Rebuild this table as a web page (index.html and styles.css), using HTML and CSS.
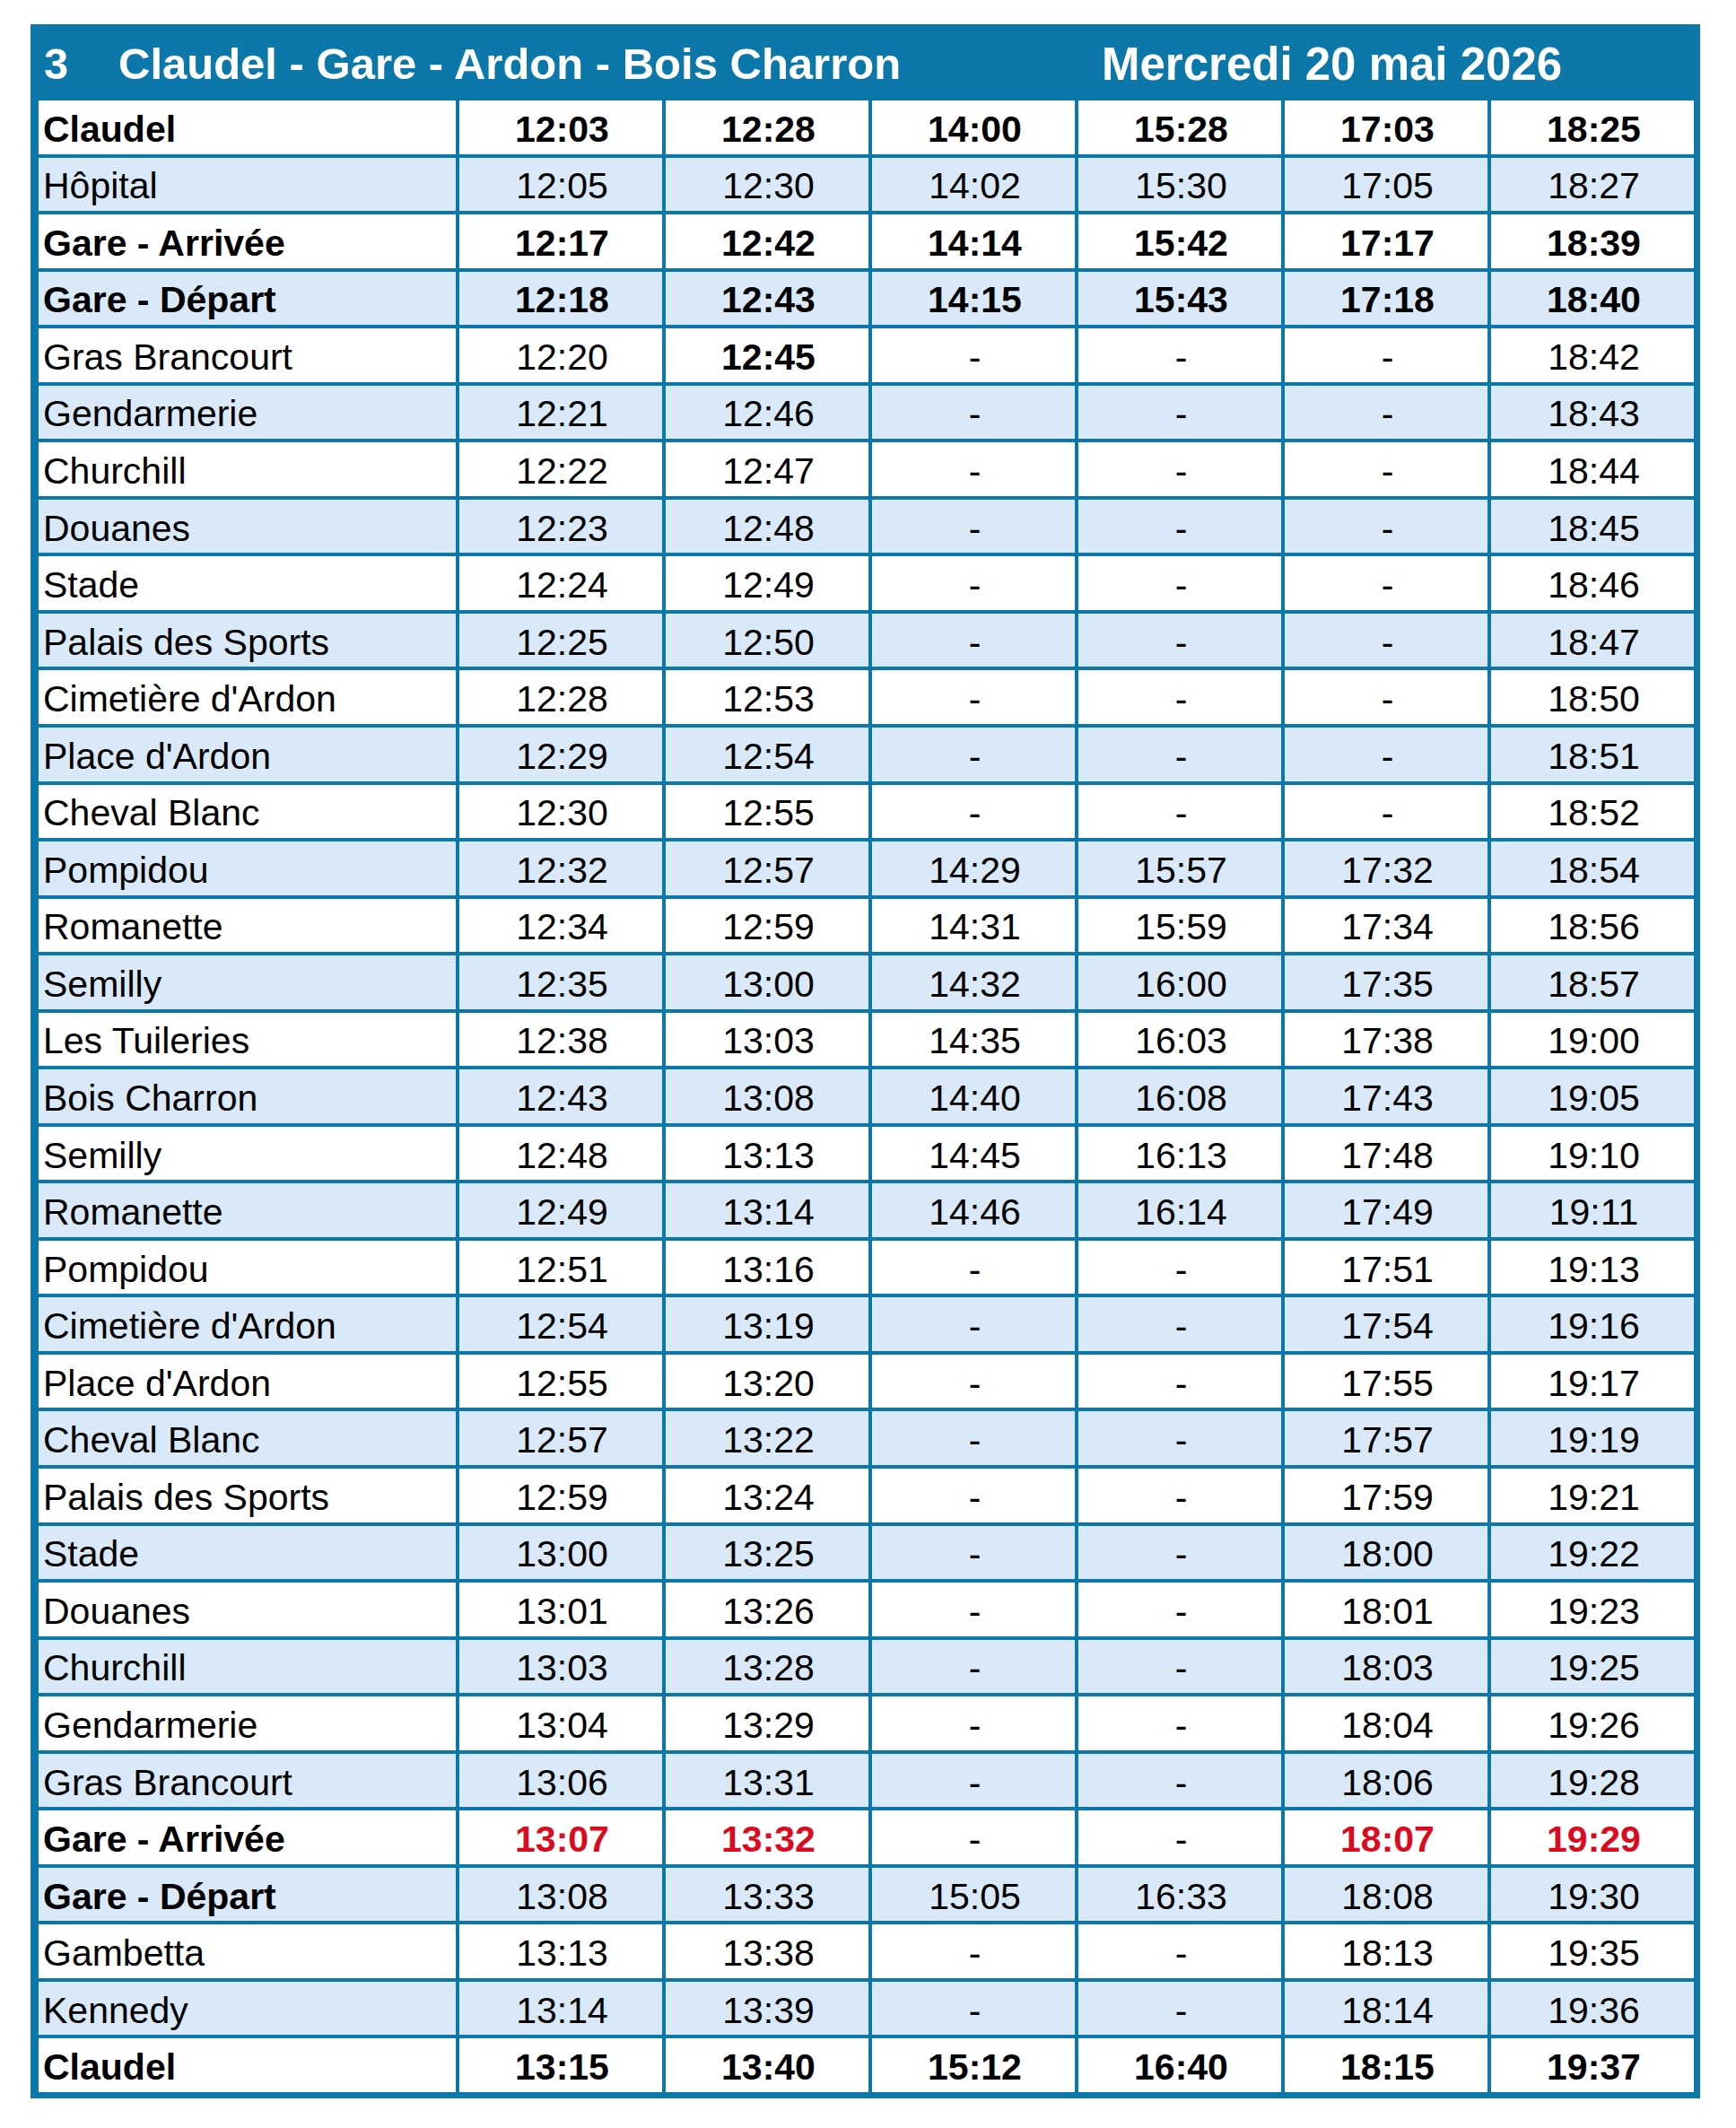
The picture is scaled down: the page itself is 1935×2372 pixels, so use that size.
FILE: index.html
```html
<!DOCTYPE html>
<html lang="fr">
<head>
<meta charset="utf-8">
<title>Ligne 3 - Mercredi 20 mai 2026</title>
<link rel="stylesheet" href="styles.css">
</head>
<body>
<div class="sheet">
  <div class="title-bar">
    <span class="line-no">3</span>
    <span class="route">Claudel - Gare - Ardon - Bois Charron</span>
    <span class="date">Mercredi 20 mai 2026</span>
  </div>
  <div class="board">
    <div class="row strong"><div class="stop">Claudel</div><div class="t">12:03</div><div class="t">12:28</div><div class="t">14:00</div><div class="t">15:28</div><div class="t">17:03</div><div class="t">18:25</div></div>
    <div class="row alt"><div class="stop">Hôpital</div><div class="t">12:05</div><div class="t">12:30</div><div class="t">14:02</div><div class="t">15:30</div><div class="t">17:05</div><div class="t">18:27</div></div>
    <div class="row strong"><div class="stop">Gare - Arrivée</div><div class="t">12:17</div><div class="t">12:42</div><div class="t">14:14</div><div class="t">15:42</div><div class="t">17:17</div><div class="t">18:39</div></div>
    <div class="row alt strong"><div class="stop">Gare - Départ</div><div class="t">12:18</div><div class="t">12:43</div><div class="t">14:15</div><div class="t">15:43</div><div class="t">17:18</div><div class="t">18:40</div></div>
    <div class="row"><div class="stop">Gras Brancourt</div><div class="t">12:20</div><div class="t b">12:45</div><div class="t">-</div><div class="t">-</div><div class="t">-</div><div class="t">18:42</div></div>
    <div class="row alt"><div class="stop">Gendarmerie</div><div class="t">12:21</div><div class="t">12:46</div><div class="t">-</div><div class="t">-</div><div class="t">-</div><div class="t">18:43</div></div>
    <div class="row"><div class="stop">Churchill</div><div class="t">12:22</div><div class="t">12:47</div><div class="t">-</div><div class="t">-</div><div class="t">-</div><div class="t">18:44</div></div>
    <div class="row alt"><div class="stop">Douanes</div><div class="t">12:23</div><div class="t">12:48</div><div class="t">-</div><div class="t">-</div><div class="t">-</div><div class="t">18:45</div></div>
    <div class="row"><div class="stop">Stade</div><div class="t">12:24</div><div class="t">12:49</div><div class="t">-</div><div class="t">-</div><div class="t">-</div><div class="t">18:46</div></div>
    <div class="row alt"><div class="stop">Palais des Sports</div><div class="t">12:25</div><div class="t">12:50</div><div class="t">-</div><div class="t">-</div><div class="t">-</div><div class="t">18:47</div></div>
    <div class="row"><div class="stop">Cimetière d'Ardon</div><div class="t">12:28</div><div class="t">12:53</div><div class="t">-</div><div class="t">-</div><div class="t">-</div><div class="t">18:50</div></div>
    <div class="row alt"><div class="stop">Place d'Ardon</div><div class="t">12:29</div><div class="t">12:54</div><div class="t">-</div><div class="t">-</div><div class="t">-</div><div class="t">18:51</div></div>
    <div class="row"><div class="stop">Cheval Blanc</div><div class="t">12:30</div><div class="t">12:55</div><div class="t">-</div><div class="t">-</div><div class="t">-</div><div class="t">18:52</div></div>
    <div class="row alt"><div class="stop">Pompidou</div><div class="t">12:32</div><div class="t">12:57</div><div class="t">14:29</div><div class="t">15:57</div><div class="t">17:32</div><div class="t">18:54</div></div>
    <div class="row"><div class="stop">Romanette</div><div class="t">12:34</div><div class="t">12:59</div><div class="t">14:31</div><div class="t">15:59</div><div class="t">17:34</div><div class="t">18:56</div></div>
    <div class="row alt"><div class="stop">Semilly</div><div class="t">12:35</div><div class="t">13:00</div><div class="t">14:32</div><div class="t">16:00</div><div class="t">17:35</div><div class="t">18:57</div></div>
    <div class="row"><div class="stop">Les Tuileries</div><div class="t">12:38</div><div class="t">13:03</div><div class="t">14:35</div><div class="t">16:03</div><div class="t">17:38</div><div class="t">19:00</div></div>
    <div class="row alt"><div class="stop">Bois Charron</div><div class="t">12:43</div><div class="t">13:08</div><div class="t">14:40</div><div class="t">16:08</div><div class="t">17:43</div><div class="t">19:05</div></div>
    <div class="row"><div class="stop">Semilly</div><div class="t">12:48</div><div class="t">13:13</div><div class="t">14:45</div><div class="t">16:13</div><div class="t">17:48</div><div class="t">19:10</div></div>
    <div class="row alt"><div class="stop">Romanette</div><div class="t">12:49</div><div class="t">13:14</div><div class="t">14:46</div><div class="t">16:14</div><div class="t">17:49</div><div class="t">19:11</div></div>
    <div class="row"><div class="stop">Pompidou</div><div class="t">12:51</div><div class="t">13:16</div><div class="t">-</div><div class="t">-</div><div class="t">17:51</div><div class="t">19:13</div></div>
    <div class="row alt"><div class="stop">Cimetière d'Ardon</div><div class="t">12:54</div><div class="t">13:19</div><div class="t">-</div><div class="t">-</div><div class="t">17:54</div><div class="t">19:16</div></div>
    <div class="row"><div class="stop">Place d'Ardon</div><div class="t">12:55</div><div class="t">13:20</div><div class="t">-</div><div class="t">-</div><div class="t">17:55</div><div class="t">19:17</div></div>
    <div class="row alt"><div class="stop">Cheval Blanc</div><div class="t">12:57</div><div class="t">13:22</div><div class="t">-</div><div class="t">-</div><div class="t">17:57</div><div class="t">19:19</div></div>
    <div class="row"><div class="stop">Palais des Sports</div><div class="t">12:59</div><div class="t">13:24</div><div class="t">-</div><div class="t">-</div><div class="t">17:59</div><div class="t">19:21</div></div>
    <div class="row alt"><div class="stop">Stade</div><div class="t">13:00</div><div class="t">13:25</div><div class="t">-</div><div class="t">-</div><div class="t">18:00</div><div class="t">19:22</div></div>
    <div class="row"><div class="stop">Douanes</div><div class="t">13:01</div><div class="t">13:26</div><div class="t">-</div><div class="t">-</div><div class="t">18:01</div><div class="t">19:23</div></div>
    <div class="row alt"><div class="stop">Churchill</div><div class="t">13:03</div><div class="t">13:28</div><div class="t">-</div><div class="t">-</div><div class="t">18:03</div><div class="t">19:25</div></div>
    <div class="row"><div class="stop">Gendarmerie</div><div class="t">13:04</div><div class="t">13:29</div><div class="t">-</div><div class="t">-</div><div class="t">18:04</div><div class="t">19:26</div></div>
    <div class="row alt"><div class="stop">Gras Brancourt</div><div class="t">13:06</div><div class="t">13:31</div><div class="t">-</div><div class="t">-</div><div class="t">18:06</div><div class="t">19:28</div></div>
    <div class="row"><div class="stop b">Gare - Arrivée</div><div class="t red">13:07</div><div class="t red">13:32</div><div class="t">-</div><div class="t">-</div><div class="t red">18:07</div><div class="t red">19:29</div></div>
    <div class="row alt"><div class="stop b">Gare - Départ</div><div class="t">13:08</div><div class="t">13:33</div><div class="t">15:05</div><div class="t">16:33</div><div class="t">18:08</div><div class="t">19:30</div></div>
    <div class="row"><div class="stop">Gambetta</div><div class="t">13:13</div><div class="t">13:38</div><div class="t">-</div><div class="t">-</div><div class="t">18:13</div><div class="t">19:35</div></div>
    <div class="row alt"><div class="stop">Kennedy</div><div class="t">13:14</div><div class="t">13:39</div><div class="t">-</div><div class="t">-</div><div class="t">18:14</div><div class="t">19:36</div></div>
    <div class="row strong"><div class="stop">Claudel</div><div class="t">13:15</div><div class="t">13:40</div><div class="t">15:12</div><div class="t">16:40</div><div class="t">18:15</div><div class="t">19:37</div></div>
  </div>
</div>
</body>
</html>
```

FILE: styles.css
```css
html, body {
  margin: 0;
  padding: 0;
  background: #ffffff;
}

body {
  font-family: "Liberation Sans", Arial, sans-serif;
  color: #000000;
}

.sheet {
  width: 1861px;
  padding: 27px 0 0 34px;
}

.title-bar {
  display: grid;
  grid-template-columns: 98px 1096px auto;
  align-items: center;
  height: 85px;
  padding-top: 3px;
  box-sizing: border-box;
  background: #0b78a9;
  color: #ffffff;
  font-weight: 700;
  font-size: 49px;
  line-height: 1;
}

.line-no {
  padding-left: 15px;
}

.date {
  font-size: 51px;
}

.board {
  display: grid;
  grid-template-columns: 465px repeat(6, 226px);
  grid-template-rows: repeat(35, 1fr);
  gap: 4px;
  height: 2220px;
  padding: 0 8px 7px 9px;
  background: #0b78a9;
  font-size: 41px;
  line-height: 1;
}

.row {
  display: contents;
}

.stop,
.t {
  display: flex;
  align-items: center;
  padding-top: 5px;
  background: #ffffff;
  white-space: nowrap;
}

.row.alt .stop,
.row.alt .t {
  background: #dae9f7;
}

.stop {
  padding-left: 5px;
}

.t {
  justify-content: center;
  padding-left: 3px;
}

.row.strong .stop,
.row.strong .t,
.b {
  font-weight: 700;
}

.red {
  color: #dc0a1e;
  font-weight: 700;
}
```
